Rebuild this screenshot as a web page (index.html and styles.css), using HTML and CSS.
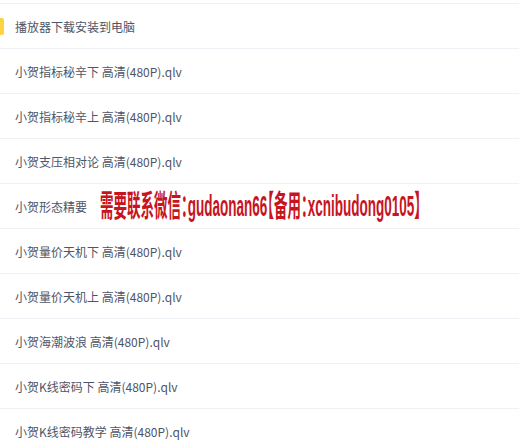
FILE: index.html
```html
<!DOCTYPE html>
<html lang="zh-CN">
<head>
    <meta charset="UTF-8">
    <meta name="viewport" content="width=device-width, initial-scale=1.0">
    <title>课程列表</title>
    <link rel="stylesheet" href="styles.css">
</head>
<body>

    <ul class="file-list">
        <li class="file-item active">播放器下载安装到电脑</li>
        <li class="file-item">小贺指标秘辛下 高清(480P).qlv</li>
        <li class="file-item">小贺指标秘辛上 高清(480P).qlv</li>
        <li class="file-item">小贺支压相对论 高清(480P).qlv</li>
        <li class="file-item">
            小贺形态精要
            <span class="watermark"><span class="wm-inner">需要联系微信：gudaonan66【备用：xcnibudong0105】</span></span>
        </li>
        <li class="file-item">小贺量价天机下 高清(480P).qlv</li>
        <li class="file-item">小贺量价天机上 高清(480P).qlv</li>
        <li class="file-item">小贺海潮波浪 高清(480P).qlv</li>
        <li class="file-item">小贺K线密码下 高清(480P).qlv</li>
        <li class="file-item">小贺K线密码教学 高清(480P).qlv</li>
    </ul>

</body>
</html>
```

FILE: styles.css
```css
body {
    margin: 0;
    padding: 0;
    background: #fff;
    font-family: "Noto Sans CJK SC", "Noto Sans", sans-serif;
    overflow: hidden;
}

.file-list {
    list-style: none;
    margin: 3px 0 0 0;
    padding: 0;
    border-top: 1px solid #eef1f6;
}

.file-item {
    position: relative;
    display: flex;
    align-items: center;
    height: 44px;
    padding-left: 15px;
    border-bottom: 1px solid #eef1f6;
    font-size: 12px;
    color: #4e5566;
    white-space: nowrap;
}

.file-item.active::before {
    content: "";
    position: absolute;
    left: 0;
    top: 14px;
    width: 4px;
    height: 17px;
    border-radius: 0 2px 2px 0;
    background: #ffd23f;
}

/* red note painted over the row */
.watermark {
    position: absolute;
    left: 100px;
    top: 0;
    width: 340px;
    height: 44px;
    display: flex;
    align-items: center;
    overflow: hidden;
}

.wm-inner {
    display: inline-block;
    font-family: "Liberation Sans", "Noto Sans CJK SC", sans-serif;
    font-weight: bold;
    font-size: 30px;
    line-height: 32px;
    color: #c8141e;
    /* half-width punctuation */
    font-feature-settings: "halt";
    transform: scaleX(0.45);
    transform-origin: left center;
}
```
